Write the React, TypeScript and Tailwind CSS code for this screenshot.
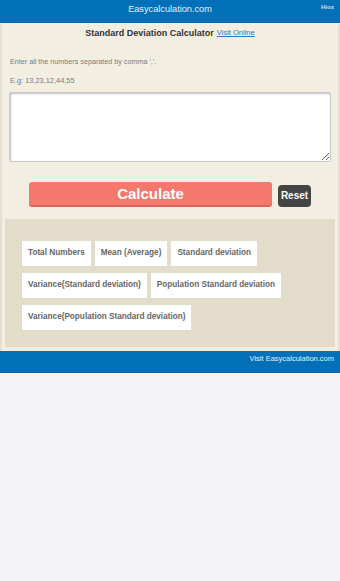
import React from "react";

const chips1 = ["Total Numbers", "Mean (Average)", "Standard deviation"];
const chips2 = ["Variance(Standard deviation)", "Population Standard deviation"];
const chips3 = ["Variance(Population Standard deviation)"];

function Chip({ label }: { label: string }) {
  return (
    <div className="bg-white h-[25px] px-[6px] flex items-center text-[8.2px] font-bold text-[#666666] whitespace-nowrap">
      {label}
    </div>
  );
}

export default function App() {
  return (
    <div
      className="min-h-[581px] w-[340px] bg-[#f4f3f6] flex flex-col"
      style={{ fontFamily: '"Liberation Sans", Arial, sans-serif' }}
    >
      <div className="relative h-[23px] bg-[#0170b9] border-b border-[#0a5f9e] flex items-center justify-center">
        <span className="text-[9.2px] text-[#e6f0f8] leading-none -mt-[3px]">Easycalculation.com</span>
        <span className="absolute right-[6px] top-[4px] text-[6px] font-semibold text-[#cfe2f1] leading-none">Hiox</span>
      </div>
      <div className="bg-[#f3eee2] border-l-2 border-r-2 border-[#e5dfd1] rounded-t-[3px] px-[3px] pb-[4px]">
        <div className="mt-[4px] h-[12px] flex items-center justify-center gap-[3px]">
          <span className="text-[9px] font-bold text-[#333333] leading-none">Standard Deviation Calculator</span>
          <span className="text-[7.5px] text-[#2a7ac9] underline leading-none">Visit Online</span>
        </div>
        <div className="mt-[18px] pl-[5px] text-[7.2px] leading-[10px] text-[#7a7a7a]">
          Enter all the numbers separated by comma &apos;,&apos;.
        </div>
        <div className="mt-[9px] pl-[5px] text-[7.4px] leading-[10px] text-[#7a7a7a]">E.g: 13,23,12,44,55</div>
        <div className="mt-[6px] px-[4px]">
          <textarea className="block w-full h-[70px] bg-white border border-[#c8c8c8] shadow-[inset_1px_1px_2px_rgba(0,0,0,0.25)] rounded-[2px] outline-none" />
        </div>
        <div className="mt-[20px] flex justify-center items-end gap-[6px]">
          <button className="w-[243px] h-[25px] bg-[#f4786c] border-b-2 border-[#d9645a] rounded-[3px] text-white text-[15px] font-bold leading-none flex items-center justify-center">
            Calculate
          </button>
          <button className="w-[33px] h-[22px] bg-[#444444] rounded-[4px] text-white text-[10px] font-bold leading-none flex items-center justify-center">
            Reset
          </button>
        </div>
        <div className="mt-[12px] bg-[#e4dccb] pt-[22px] pb-[17px] pl-[17px] flex flex-col gap-[7px]">
          <div className="flex gap-[4px]">
            {chips1.map((c) => (
              <Chip key={c} label={c} />
            ))}
          </div>
          <div className="flex gap-[4px]">
            {chips2.map((c) => (
              <Chip key={c} label={c} />
            ))}
          </div>
          <div className="flex gap-[4px]">
            {chips3.map((c) => (
              <Chip key={c} label={c} />
            ))}
          </div>
        </div>
      </div>
      <div className="h-[22px] bg-[#0170b9] border-b border-[#0a5f9e] flex justify-end pr-[6px] pt-[3px]">
        <span className="text-[7.5px] text-[#e6f0f8] leading-[10px]">Visit Easycalculation.com</span>
      </div>
      <div className="h-[1px] bg-[#ffffff]" />
    </div>
  );
}
